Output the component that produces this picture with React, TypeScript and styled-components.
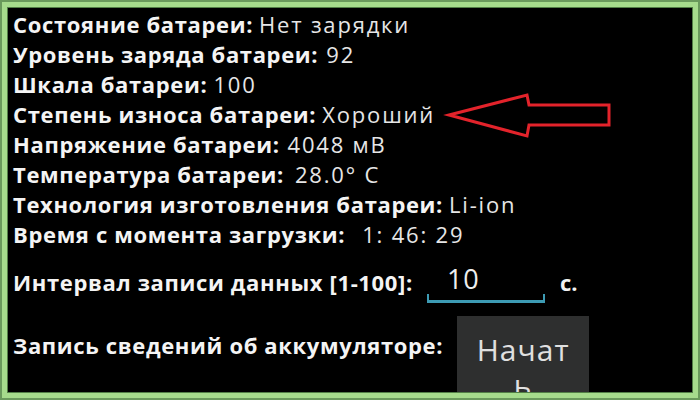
import { createGlobalStyle } from "styled-components";
import styled from "styled-components";

const GlobalStyle = createGlobalStyle`
  html, body {
    margin: 0;
    padding: 0;
    background: #000;
  }
  body {
    font-family: "Open Sans", "Noto Sans", "DejaVu Sans", sans-serif;
  }
`;

const Frame = styled.div`
  position: relative;
  width: 700px;
  height: 400px;
  box-sizing: border-box;
  border: 2px solid #6a9a5c;
  background: #a6dc8c;
  padding: 6px;
  display: flex;
`;

const Screen = styled.div`
  flex: 1;
  background: #000;
  box-shadow: 0 0 0 1px #527f46;
  overflow: hidden;
  padding: 1px 0 0 5px;
  display: flex;
  flex-direction: column;
  color: #f2f2f2;
`;

const StatusList = styled.div`
  display: flex;
  flex-direction: column;
`;

const Row = styled.div`
  display: flex;
  align-items: center;
  height: 30px;
  font-size: 22px;
  white-space: nowrap;
`;

const Label = styled.span`
  font-weight: 700;
  color: #f4f4f4;
  letter-spacing: 0.65px;
`;

const Value = styled.span<{ gap?: number }>`
  margin-left: ${({ gap }) => gap ?? 6}px;
  font-weight: 400;
  color: #e6e6e6;
  letter-spacing: 1.8px;
`;

const IntervalRow = styled.div`
  display: flex;
  align-items: center;
  margin-top: 12px;
  height: 42px;
  font-size: 22px;
  white-space: nowrap;
`;

const Field = styled.div`
  position: relative;
  margin-left: 14px;
  width: 118px;
  height: 42px;
  box-sizing: border-box;
  padding-left: 20px;
  font-size: 27px;
  line-height: 36px;
  letter-spacing: 1px;
  color: #eeeeee;
  border-bottom: 3px solid #3d9bb4;

  &::before,
  &::after {
    content: "";
    position: absolute;
    bottom: 0;
    width: 2px;
    height: 6px;
    background: #3d9bb4;
  }
  &::before {
    left: 0;
  }
  &::after {
    right: 0;
  }
`;

const Unit = styled.span`
  margin-left: 15px;
  font-weight: 700;
`;

const RecordRow = styled.div`
  display: flex;
  align-items: flex-start;
  margin-top: 13px;
  font-size: 22px;
  white-space: nowrap;
`;

const RecordLabel = styled(Label)`
  padding-top: 14px;
  line-height: 30px;
`;

const StartButton = styled.button`
  margin-left: 14px;
  width: 132px;
  height: 96px;
  box-sizing: border-box;
  padding: 6px 16px 0;
  border: none;
  background: #2e2f2f;
  color: #e0e0e0;
  font-family: "Open Sans", "Noto Sans", sans-serif;
  font-size: 30px;
  line-height: 35px;
  letter-spacing: 1px;
  text-align: center;
  white-space: normal;
  word-break: break-all;
`;

const Arrow = styled.svg`
  position: absolute;
  left: 438px;
  top: 84px;
  pointer-events: none;
`;

const rows: { label: string; value: string; gap?: number }[] = [
  { label: "Состояние батареи:", value: "Нет зарядки" },
  { label: "Уровень заряда батареи:", value: "92", gap: 8 },
  { label: "Шкала батареи:", value: "100" },
  { label: "Степень износа батареи:", value: "Хороший" },
  { label: "Напряжение батареи:", value: "4048 мВ", gap: 8 },
  { label: "Температура батареи:", value: "28.0° C", gap: 11 },
  { label: "Технология изготовления батареи:", value: "Li-ion" },
  { label: "Время с момента загрузки:", value: "1: 46: 29", gap: 17 },
];

export default function App() {
  return (
    <>
      <GlobalStyle />
      <Frame>
        <Screen>
          <StatusList>
            {rows.map((r) => (
              <Row key={r.label}>
                <Label>{r.label}</Label>
                <Value gap={r.gap}>{r.value}</Value>
              </Row>
            ))}
          </StatusList>
          <IntervalRow>
            <Label>Интервал записи данных [1-100]:</Label>
            <Field>10</Field>
            <Unit>с.</Unit>
          </IntervalRow>
          <RecordRow>
            <RecordLabel>Запись сведений об аккумуляторе:</RecordLabel>
            <StartButton>Начать</StartButton>
          </RecordRow>
        </Screen>
        <Arrow width="180" height="60" viewBox="438 84 180 60">
          <polygon
            points="447,113 525,93 527,103 607,103 607,123 527,123 525,134"
            fill="none"
            stroke="#e3232b"
            strokeWidth="3"
            strokeLinejoin="miter"
          />
        </Arrow>
      </Frame>
    </>
  );
}
